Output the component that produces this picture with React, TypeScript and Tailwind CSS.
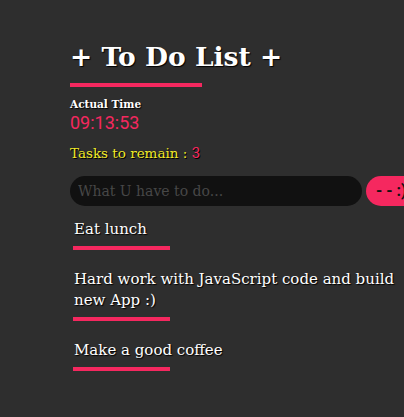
import * as React from 'react';

const slab = 'font-["DejaVu_Serif",serif]';

export default function App() {
  const [tasks] = React.useState([
    'Eat lunch',
    'Hard work with JavaScript code and build new App :)',
    'Make a good coffee',
  ]);

  return (
    <div className="h-[417px] w-[404px] overflow-hidden bg-[#2e2e2e]">
      <div className="pl-[70px] pt-[40px]">
        <h1 className={`${slab} text-[26.5px] leading-[34px] font-bold whitespace-nowrap text-white [text-shadow:1px_1px_1px_#000]`}>
          + To Do List +
        </h1>
        <div className="mt-[9px] h-[4px] w-[132px] bg-[#f5285f]" />

        <div className={`${slab} mt-[10px] text-[10.5px] leading-[14px] font-bold text-white [text-shadow:1px_1px_1px_#000]`}>
          Actual Time
        </div>
        <div className='mt-[1px] font-["Roboto",sans-serif] text-[18px] leading-[22px] text-[#f5285f]'>
          09:13:53
        </div>

        <div className={`${slab} mt-[10px] text-[13.5px] leading-[18px] text-[#f0ea28] [text-shadow:1px_1px_0_#000]`}>
          Tasks to remain : <span className='font-["Roboto",sans-serif] text-[15px] text-[#f5285f]'>{tasks.length}</span>
        </div>

        <div className="mt-[14px] flex items-center gap-[4px]">
          <input
            placeholder="What U have to do..."
            className={`${slab} h-[30px] w-[292px] shrink-0 rounded-full bg-[#111111] px-[8px] text-[14px] text-white outline-none placeholder:text-[#474747]`}
          />
          <button className='h-[30px] shrink-0 rounded-full bg-[#f5285f] px-[10px] font-["Roboto",sans-serif] text-[16px] font-bold whitespace-nowrap text-[#111]'>
            - - :)
          </button>
        </div>

        <ul className="mt-[13px] w-[340px] pl-[4px]">
          {tasks.map(t => (
            <li key={t} className="mb-[19px]">
              <p className={`${slab} text-[15px] leading-[21px] text-white [text-shadow:1px_1px_1px_#000]`}>{t}</p>
              <div className="mt-[6px] -ml-[1px] h-[4px] w-[97px] bg-[#f5285f]" />
            </li>
          ))}
        </ul>
      </div>
    </div>
  );
}
